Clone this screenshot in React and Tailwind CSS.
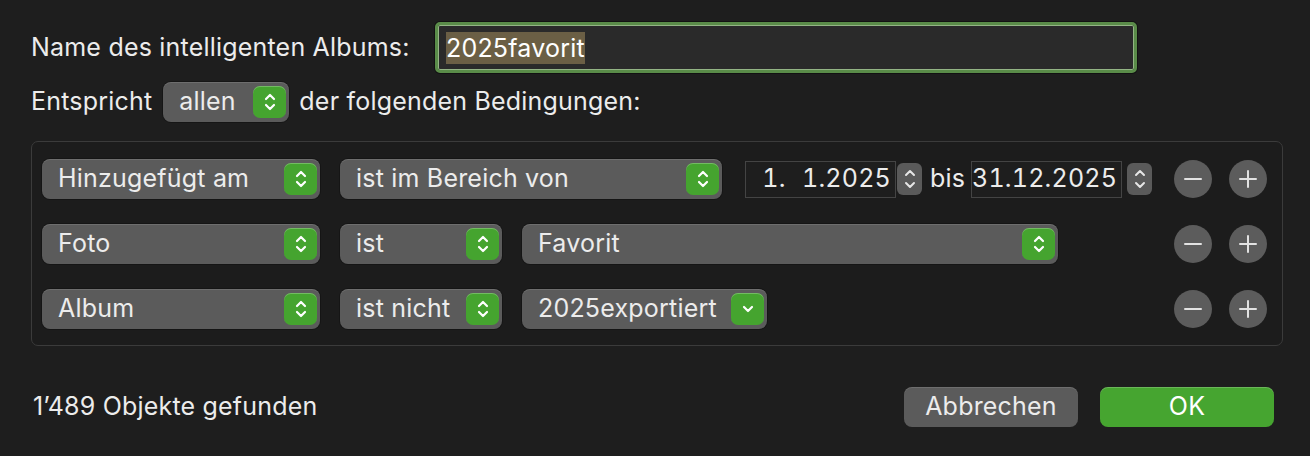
import React from "react";

const font = { fontFamily: "Inter, 'Liberation Sans', sans-serif" };

function Chevrons({ down }) {
  return (
    <svg width="14" height="22" viewBox="0 0 14 22" fill="none" stroke="white" strokeWidth="2.2" strokeLinecap="round" strokeLinejoin="round">
      {down ? (
        <path d="M3 9 L7 13 L11 9" />
      ) : (
        <>
          <path d="M3 8 L7 4 L11 8" />
          <path d="M3 14 L7 18 L11 14" />
        </>
      )}
    </svg>
  );
}

function GreenBtn({ down }) {
  return (
    <div className="flex h-[32px] w-[33px] shrink-0 items-center justify-center rounded-[7px] bg-[#45a42f] shadow-[inset_0_1px_0_rgba(255,255,255,0.25)]">
      <Chevrons down={down} />
    </div>
  );
}

function Popup({ label, w, down }) {
  return (
    <div
      className="flex h-[40px] shrink-0 items-center justify-between rounded-[8px] bg-[#5b5b5b] pl-[16px] pr-[3px] shadow-[inset_0_1px_0_rgba(255,255,255,0.12),0_0_0_1px_rgba(0,0,0,0.25)]"
      style={{ width: w }}
    >
      <span className="text-[25px] tracking-[0.2px] text-[#ececec]">{label}</span>
      <GreenBtn down={down} />
    </div>
  );
}

function SmallStepper() {
  return (
    <div className="flex h-[32px] w-[25px] shrink-0 flex-col items-center justify-center rounded-[6px] bg-[#5a5a5a]">
      <svg width="14" height="26" viewBox="0 0 14 26" fill="none" stroke="#e6e6e6" strokeWidth="2" strokeLinecap="round" strokeLinejoin="round">
        <path d="M3 9 L7 5 L11 9" />
        <path d="M3 17 L7 21 L11 17" />
      </svg>
    </div>
  );
}

function DateField({ text, w }) {
  return (
    <div
      className="flex h-[37px] shrink-0 items-center justify-end border border-[#444444] bg-[#1e1e1e] pr-[4px] text-[25px] tracking-[0.2px] tabular-nums text-[#ececec] whitespace-pre"
      style={{ width: w }}
    >
      {text}
    </div>
  );
}

function Circle({ plus }) {
  return (
    <div className="flex h-[38px] w-[38px] shrink-0 items-center justify-center rounded-full bg-[#5c5c5c]">
      <svg width="22" height="22" viewBox="0 0 22 22" stroke="#e2e2e2" strokeWidth="2" strokeLinecap="round">
        <path d="M3 11 H19" />
        {plus && <path d="M11 3 V19" />}
      </svg>
    </div>
  );
}

function PlusMinus() {
  return (
    <div className="ml-auto flex gap-[17px]">
      <Circle />
      <Circle plus />
    </div>
  );
}

export default function App() {
  return (
    <div className="h-[456px] w-[1310px] bg-[#1e1e1e] text-[#ececec]" style={font}>
      <div className="flex flex-col pl-[31px] pr-[27px] pt-[22px] text-[25px] tracking-[0.2px]">
        <div className="flex items-center">
          <span className="w-[404px]">Name des intelligenten Albums:</span>
          <div className="flex h-[51px] w-[702px] items-center rounded-[5px] border-[3px] border-[#5a8c49] bg-[#2a2a2a] pl-[8px] shadow-[inset_0_0_0_1px_#93b485,0_0_0_1px_rgba(0,0,0,0.4)]">
            <span className="bg-[#6b5f45] py-[1px] leading-[30px] text-white">2025favorit</span>
          </div>
        </div>

        <div className="mt-[9px] flex h-[40px] items-center">
          <span>Entspricht</span>
          <div className="ml-[11px] mr-[10px]">
            <Popup label="allen" w={126} />
          </div>
          <span>der folgenden Bedingungen:</span>
        </div>

        <div className="mt-[19px] flex flex-col gap-[25px] rounded-[7px] border border-[#3b3b3b] bg-[#1c1c1c] pb-[16px] pl-[10px] pr-[15px] pt-[17px]">
          <div className="flex h-[40px] items-center">
            <Popup label="Hinzugefügt am" w={278} />
            <div className="ml-[20px]">
              <Popup label="ist im Bereich von" w={382} />
            </div>
            <div className="ml-[23px] flex items-center">
              <DateField text={"\u20071.\u20071.2025"} w={151} />
              <div className="ml-[1px]"><SmallStepper /></div>
              <span className="ml-[8px] mr-[6px]">bis</span>
              <DateField text="31.12.2025" w={151} />
              <div className="ml-[5px]"><SmallStepper /></div>
            </div>
            <PlusMinus />
          </div>

          <div className="flex h-[40px] items-center">
            <Popup label="Foto" w={278} />
            <div className="ml-[20px]">
              <Popup label="ist" w={162} />
            </div>
            <div className="ml-[20px]">
              <Popup label="Favorit" w={536} />
            </div>
            <PlusMinus />
          </div>

          <div className="flex h-[40px] items-center">
            <Popup label="Album" w={278} />
            <div className="ml-[20px]">
              <Popup label="ist nicht" w={162} />
            </div>
            <div className="ml-[20px]">
              <Popup label="2025exportiert" w={245} down />
            </div>
            <PlusMinus />
          </div>
        </div>

        <div className="mt-[41px] flex h-[40px] items-center">
          <span className="ml-[2px]">1’489 Objekte gefunden</span>
          <div className="ml-auto mr-[9px] flex gap-[22px]">
            <div className="flex h-[40px] w-[174px] items-center justify-center rounded-[8px] bg-[#5b5b5b] shadow-[inset_0_1px_0_rgba(255,255,255,0.12)]">
              Abbrechen
            </div>
            <div className="flex h-[40px] w-[174px] items-center justify-center rounded-[8px] bg-[#46a530] text-white shadow-[inset_0_1px_0_rgba(255,255,255,0.2)]">
              OK
            </div>
          </div>
        </div>
      </div>
    </div>
  );
}
